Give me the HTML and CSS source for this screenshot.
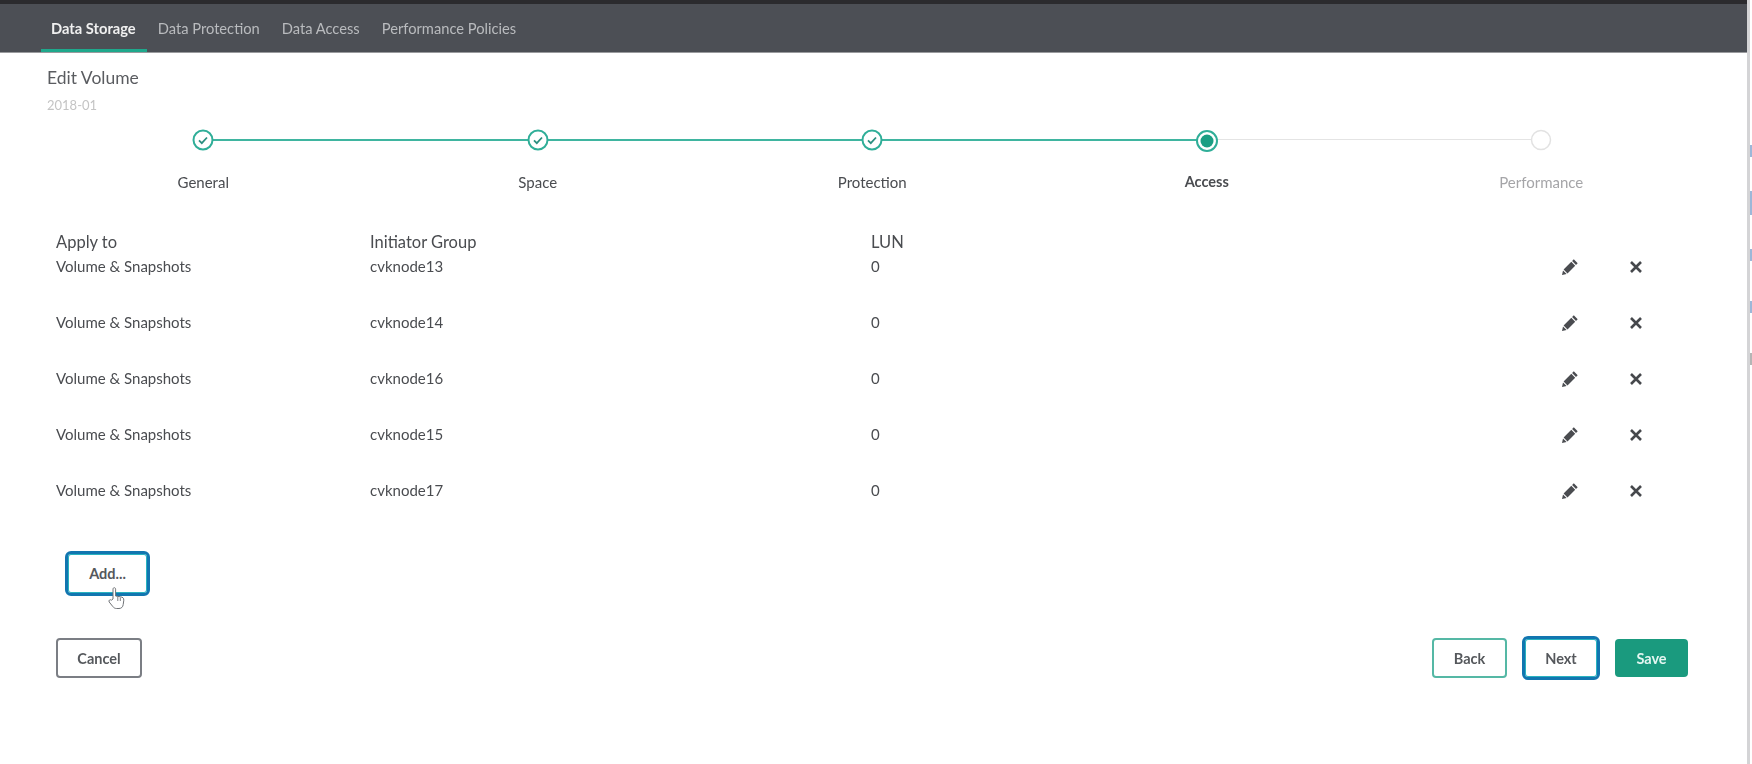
FILE: index.html
```html
<!DOCTYPE html>
<html>
<head>
    <title>Edit Volume</title>
    <link rel="stylesheet" href="styles.css">
</head>
<body>
    <div class="page">
        <div class="top-bar"></div>

        <!-- Tabs -->
        <nav class="tabs">
            <a class="tab active">Data Storage</a>
            <a class="tab">Data Protection</a>
            <a class="tab">Data Access</a>
            <a class="tab">Performance Policies</a>
        </nav>

        <h1 class="title">Edit Volume</h1>
        <div class="subtitle">2018-01</div>

        <!-- Wizard steps -->
        <div class="stepper">
            <div class="step done">
                <span class="dot"><svg viewBox="0 0 22 22" width="22" height="22"><circle cx="11" cy="11" r="9.5" fill="#fff" stroke="#2fae98" stroke-width="2"/><path d="M7 11.3l2.8 2.8 5.2-5.6" fill="none" stroke="#2b8f80" stroke-width="1.8"/></svg></span>
                <span class="step-label">General</span>
            </div>
            <div class="step done">
                <span class="dot"><svg viewBox="0 0 22 22" width="22" height="22"><circle cx="11" cy="11" r="9.5" fill="#fff" stroke="#2fae98" stroke-width="2"/><path d="M7 11.3l2.8 2.8 5.2-5.6" fill="none" stroke="#2b8f80" stroke-width="1.8"/></svg></span>
                <span class="step-label">Space</span>
            </div>
            <div class="step done">
                <span class="dot"><svg viewBox="0 0 22 22" width="22" height="22"><circle cx="11" cy="11" r="9.5" fill="#fff" stroke="#2fae98" stroke-width="2"/><path d="M7 11.3l2.8 2.8 5.2-5.6" fill="none" stroke="#2b8f80" stroke-width="1.8"/></svg></span>
                <span class="step-label">Protection</span>
            </div>
            <div class="step current">
                <span class="dot"><svg viewBox="0 0 22 22" width="22" height="22"><circle cx="11" cy="11" r="10" fill="#fff" stroke="#2fae98" stroke-width="2"/><circle cx="11" cy="11" r="6.5" fill="#1a9e83"/></svg></span>
                <span class="step-label">Access</span>
            </div>
            <div class="step todo">
                <span class="dot"><svg viewBox="0 0 22 22" width="22" height="22"><circle cx="11" cy="11" r="9.5" fill="#fff" stroke="#e2e2e2" stroke-width="1.5"/></svg></span>
                <span class="step-label">Performance</span>
            </div>
        </div>

        <!-- Access list -->
        <div class="access-list">
            <div class="access-row head">
                <span>Apply to</span>
                <span>Initiator Group</span>
                <span>LUN</span>
            </div>
            <div class="access-row">
                <span>Volume &amp; Snapshots</span>
                <span>cvknode13</span>
                <span>0</span>
                <span class="icon"><svg viewBox="0 0 18 18" width="18" height="18"><path d="M12.800 1.300l3.900 3.900-1.700 1.700-3.900-3.900zM10.300 3.800l3.900 3.900-7.700 7.700-3.900-3.900zM2 12.400l3.600 3.600-4.600 1z" fill="#4a4c50"/></svg></span>
                <span class="icon"><svg viewBox="0 0 12 12" width="12" height="12"><path d="M1 1l10 10M11 1L1 11" stroke="#46484c" stroke-width="2.600"/></svg></span>
            </div>
            <div class="access-row">
                <span>Volume &amp; Snapshots</span>
                <span>cvknode14</span>
                <span>0</span>
                <span class="icon"><svg viewBox="0 0 18 18" width="18" height="18"><path d="M12.800 1.300l3.900 3.900-1.700 1.700-3.900-3.900zM10.300 3.800l3.900 3.900-7.700 7.700-3.900-3.900zM2 12.400l3.600 3.600-4.600 1z" fill="#4a4c50"/></svg></span>
                <span class="icon"><svg viewBox="0 0 12 12" width="12" height="12"><path d="M1 1l10 10M11 1L1 11" stroke="#46484c" stroke-width="2.600"/></svg></span>
            </div>
            <div class="access-row">
                <span>Volume &amp; Snapshots</span>
                <span>cvknode16</span>
                <span>0</span>
                <span class="icon"><svg viewBox="0 0 18 18" width="18" height="18"><path d="M12.800 1.300l3.900 3.900-1.700 1.700-3.900-3.900zM10.300 3.800l3.900 3.900-7.700 7.700-3.900-3.900zM2 12.400l3.600 3.600-4.600 1z" fill="#4a4c50"/></svg></span>
                <span class="icon"><svg viewBox="0 0 12 12" width="12" height="12"><path d="M1 1l10 10M11 1L1 11" stroke="#46484c" stroke-width="2.600"/></svg></span>
            </div>
            <div class="access-row">
                <span>Volume &amp; Snapshots</span>
                <span>cvknode15</span>
                <span>0</span>
                <span class="icon"><svg viewBox="0 0 18 18" width="18" height="18"><path d="M12.800 1.300l3.900 3.900-1.700 1.700-3.900-3.900zM10.300 3.800l3.900 3.900-7.700 7.700-3.900-3.900zM2 12.400l3.600 3.600-4.600 1z" fill="#4a4c50"/></svg></span>
                <span class="icon"><svg viewBox="0 0 12 12" width="12" height="12"><path d="M1 1l10 10M11 1L1 11" stroke="#46484c" stroke-width="2.600"/></svg></span>
            </div>
            <div class="access-row">
                <span>Volume &amp; Snapshots</span>
                <span>cvknode17</span>
                <span>0</span>
                <span class="icon"><svg viewBox="0 0 18 18" width="18" height="18"><path d="M12.800 1.300l3.900 3.900-1.700 1.700-3.900-3.900zM10.300 3.800l3.900 3.900-7.700 7.700-3.900-3.900zM2 12.400l3.600 3.600-4.600 1z" fill="#4a4c50"/></svg></span>
                <span class="icon"><svg viewBox="0 0 12 12" width="12" height="12"><path d="M1 1l10 10M11 1L1 11" stroke="#46484c" stroke-width="2.600"/></svg></span>
            </div>
        </div>

        <div class="add-wrap">
            <button class="btn btn-focus btn-add">Add...</button>
            <svg class="hand" viewBox="0 0 20 24" width="20" height="24"><path d="M6 13V3.200c0-2 2.600-2 2.600 0V10l5 .8c2 .4 3.400 1.200 3.200 3.400l-.6 4.400c-.3 2.400-1.800 3.900-4.200 3.900H9.600c-1.800 0-2.800-.7-3.800-2L2.200 16c-1-1.600.9-3 2.200-1.800z" fill="#fff" stroke="#6f7276" stroke-width="1"/><path d="M10.800 11v4M13.300 11.500V15" stroke="#6f7276" stroke-width=".9"/></svg>
        </div>

        <!-- Footer buttons -->
        <div class="actions">
            <button class="btn btn-cancel">Cancel</button>
            <div class="actions-right">
                <button class="btn btn-back">Back</button>
                <button class="btn btn-focus btn-next">Next</button>
                <button class="btn btn-save">Save</button>
            </div>
        </div>
    </div>

    <div class="edge">
        <i class="mark"></i>
        <i class="mark tall"></i>
        <i class="mark"></i>
        <i class="mark"></i>
        <i class="mark grey"></i>
    </div>
</body>
</html>
```

FILE: styles.css
```css
/* Layout */
html, body {
    margin: 0;
    height: 100%;
}
body {
    display: flex;
    height: 764px;
    overflow: hidden;
    font-family: 'Lato', 'Liberation Sans', sans-serif;
    color: #4a4c50;
    background-color: #fff;
}
.page {
    width: 1747px;
    flex: none;
    filter: blur(0.5px);
}

/* Header */
.top-bar {
    height: 4px;
    background-color: #2b2b2e;
}
.tabs {
    display: flex;
    align-items: center;
    height: 48px;
    padding-left: 41px;
    background-color: #4c4f55;
    box-shadow: 0 1px 0 #9a9b9e;
}
.tab {
    position: relative;
    padding: 0 10px;
    margin-right: 2px;
    font-size: 14.7px;
    color: #b9bbbe;
}
.tab.active {
    color: #f0f0f0;
    font-weight: 700;
    line-height: 48px;
}
.tab.active::after {
    content: "";
    position: absolute;
    left: 0;
    right: -1px;
    bottom: 0;
    height: 3px;
    background-color: #1fa88c;
}
.title {
    margin: 15px 0 0 47px;
    font-size: 17.5px;
    line-height: 22px;
    font-weight: 400;
    color: #5a5c60;
}
.subtitle {
    margin: 8px 0 0 47px;
    font-size: 13px;
    line-height: 16px;
    color: #c4c4c4;
}

/* Stepper */
.stepper {
    display: grid;
    grid-template-columns: repeat(5, 334.5px);
    margin: 16px 0 0 36px;
}
.step {
    position: relative;
    display: flex;
    flex-direction: column;
    align-items: center;
}
.step::after {
    content: "";
    position: absolute;
    top: 10px;
    left: 50%;
    width: 100%;
    height: 2px;
    background-color: #3fb5a0;
}
.step.current::after {
    height: 1px;
    background-color: #e4e4e4;
}
.step.todo::after {
    display: none;
}
.dot {
    position: relative;
    z-index: 1;
    height: 22px;
}
.dot svg {
    display: block;
}
.step.current .dot {
    margin-top: 1px;
    margin-bottom: -1px;
}
.step-label {
    margin-top: 22px;
    font-size: 15px;
    line-height: 18px;
}
.step.current .step-label {
    font-size: 14.5px;
    font-weight: 700;
}
.step.todo .step-label {
    color: #a5a5a8;
}

/* Access list */
.access-list {
    width: 1613px;
    margin: 40px 0 0 56px;
}
.access-row {
    display: grid;
    grid-template-columns: 314px 501px 1fr 66px 66px;
    align-items: center;
    height: 28px;
    margin-bottom: 28px;
    font-size: 15px;
}
.access-row.head {
    height: 22px;
    margin-bottom: -1px;
    font-size: 16.5px;
}
.icon {
    display: flex;
    justify-content: center;
    margin-top: 2px;
}

/* Buttons */
.btn {
    box-sizing: border-box;
    padding: 0;
    font-family: inherit;
    font-size: 14.5px;
    font-weight: 700;
    color: #55585c;
    background-color: #fff;
    border: 2px solid #7b7e84;
    border-radius: 4px;
}
.btn-focus {
    border: 3px solid #1276b0;
    border-radius: 6px;
    box-shadow: inset 0 0 0 1px #29b3c0;
}
.add-wrap {
    position: relative;
    width: 85px;
    height: 45px;
    margin: 47px 0 0 65px;
}
.btn-add {
    width: 85px;
    height: 45px;
}
.hand {
    position: absolute;
    left: 42px;
    top: 35px;
}
.actions {
    display: flex;
    justify-content: space-between;
    align-items: center;
    height: 44px;
    margin-top: 40px;
    padding: 0 59px 0 56px;
}
.actions-right {
    display: flex;
    align-items: center;
    gap: 15px;
}
.btn-cancel {
    width: 86px;
    height: 40px;
}
.btn-back {
    width: 75px;
    height: 40px;
    border-color: #55b8a5;
}
.btn-next {
    width: 78px;
    height: 44px;
}
.btn-save {
    width: 73px;
    height: 38px;
    color: #e4f6f1;
    background-color: #1a9a7e;
    border: none;
}

/* Window behind the page, right edge */
.edge {
    flex: 1;
    display: flex;
    flex-direction: column;
    align-items: flex-end;
    gap: 40px;
    padding-top: 145px;
    border-left: 3px solid #d4d4d6;
    box-sizing: border-box;
}
.mark {
    width: 2px;
    height: 12px;
    background-color: #9db7d8;
}
.mark.tall {
    height: 24px;
    margin: -6px 0;
}
.mark.grey {
    background-color: #b5b5b5;
}
```
